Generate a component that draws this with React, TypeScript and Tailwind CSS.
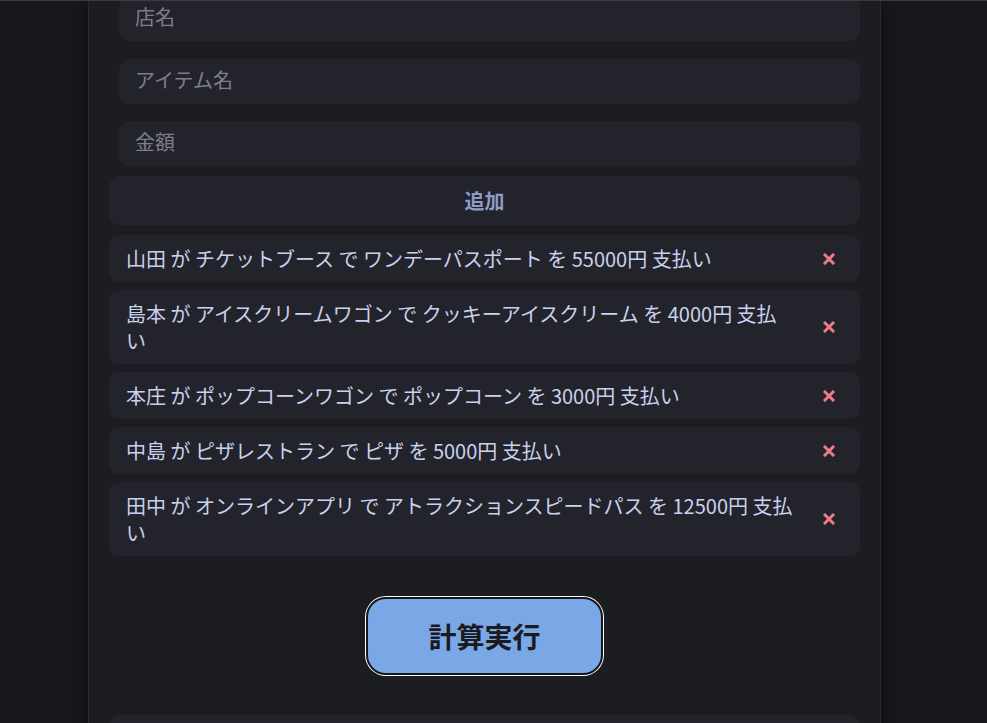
import { useState } from "react";

type Payment = {
  name: string;
  shop: string;
  item: string;
  amount: number;
};

const payments: Payment[] = [
  { name: "山田", shop: "チケットブース", item: "ワンデーパスポート", amount: 55000 },
  { name: "島本", shop: "アイスクリームワゴン", item: "クッキーアイスクリーム", amount: 4000 },
  { name: "本庄", shop: "ポップコーンワゴン", item: "ポップコーン", amount: 3000 },
  { name: "中島", shop: "ピザレストラン", item: "ピザ", amount: 5000 },
  { name: "田中", shop: "オンラインアプリ", item: "アトラクションスピードパス", amount: 12500 },
];

function CrossIcon() {
  return (
    <svg width="12" height="12" viewBox="0 0 12 12" aria-hidden="true">
      <path d="M2 2 L10 10 M10 2 L2 10" stroke="#f0798a" strokeWidth="3" strokeLinecap="square" />
    </svg>
  );
}

function Field({ placeholder, className }: { placeholder: string; className?: string }) {
  const [value, setValue] = useState("");
  return (
    <input
      value={value}
      onChange={(e) => setValue(e.target.value)}
      placeholder={placeholder}
      className={
        "ml-[10px] h-[45px] rounded-[11px] bg-[#23242b] px-4 pb-[4px] text-[20px] text-[#cdd6f4] placeholder:text-[#7e7f86] outline-none " +
        (className ?? "")
      }
    />
  );
}

export default function App() {
  const [list, setList] = useState(payments);

  return (
    <div className="h-[723px] overflow-hidden border-t border-[#3c3c3e] bg-[#17181b] font-['Noto_Sans_CJK_JP','Noto_Sans',sans-serif]">
      <div className="flex justify-center pr-[18px]">
        <div className="flex h-[800px] w-[793px] flex-col border-x border-[#2a2b30] bg-[#1c1d21] px-5 shadow-[0_0_18px_rgba(0,0,0,0.45)]">
          <Field placeholder="店名" className="-mt-[5px]" />
          <Field placeholder="アイテム名" className="mt-[18px]" />
          <Field placeholder="金額" className="mt-[17px]" />

          <button className="mt-[10px] h-[49px] rounded-[11px] bg-[#23242b] text-[20px] font-bold text-[#8e9cc6]">
            追加
          </button>

          <ul className="mt-[10px] flex flex-col gap-2">
            {list.map((p, i) => (
              <li
                key={i}
                className="flex items-center gap-[13px] rounded-[10px] bg-[#23242b] py-[10px] pl-[17px] pr-[10px] text-[20px] leading-[27px] text-[#c9d1ee]"
              >
                <span className="flex-1">
                  {p.name} が {p.shop} で {p.item} を {p.amount}円 支払い
                </span>
                <button
                  onClick={() => setList(list.filter((_, j) => j !== i))}
                  className="flex w-[42px] items-center justify-center"
                >
                  <CrossIcon />
                </button>
              </li>
            ))}
          </ul>

          <button className="mx-auto mt-[41px] h-[78px] w-[237px] rounded-[20px] border-2 border-[#16171a] bg-[#7aa7e6] text-[28px] font-bold text-[#1a1b1e] ring-1 ring-white">
            計算実行
          </button>

          <div className="mt-[40px] h-[60px] rounded-[12px] bg-[#23242b]" />
        </div>
      </div>
    </div>
  );
}
